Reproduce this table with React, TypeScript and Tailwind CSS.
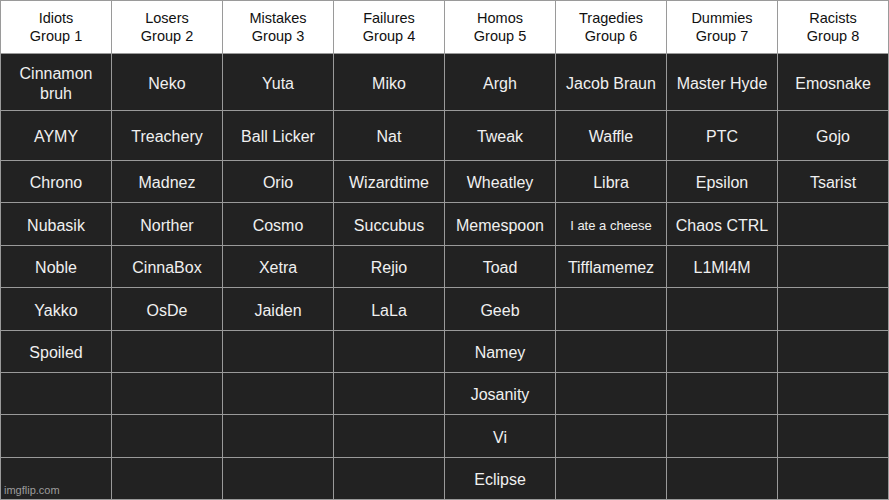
import React from "react";

const groups = [
    { name: "Idiots", members: ["Cinnamon bruh", "AYMY", "Chrono", "Nubasik", "Noble", "Yakko", "Spoiled"] },
    { name: "Losers", members: ["Neko", "Treachery", "Madnez", "Norther", "CinnaBox", "OsDe"] },
    { name: "Mistakes", members: ["Yuta", "Ball Licker", "Orio", "Cosmo", "Xetra", "Jaiden"] },
    { name: "Failures", members: ["Miko", "Nat", "Wizardtime", "Succubus", "Rejio", "LaLa"] },
    { name: "Homos", members: ["Argh", "Tweak", "Wheatley", "Memespoon", "Toad", "Geeb", "Namey", "Josanity", "Vi", "Eclipse"] },
    { name: "Tragedies", members: ["Jacob Braun", "Waffle", "Libra", "I ate a cheese", "Tifflamemez"] },
    { name: "Dummies", members: ["Master Hyde", "PTC", "Epsilon", "Chaos CTRL", "L1Ml4M"] },
    { name: "Racists", members: ["Emosnake", "Gojo", "Tsarist"] },
];

const ROWS = 10;

export default function App() {
    const rows = Array.from({ length: ROWS }, (_, r) => groups.map((g) => g.members[r] ?? ""));

    return (
        <div
            className="relative w-[889px] h-[500px] overflow-hidden bg-[#9a9a9a] p-px"
            style={{ fontFamily: '"Liberation Sans", Arial, sans-serif' }}
        >
            <div className="grid grid-cols-8 gap-px h-full grid-rows-[52px_56px_49px_41px_42px_41px_42px_41px_41px_42px_41px]">
                {groups.map((g, i) => (
                    <div
                        key={g.name}
                        className="bg-white flex flex-col items-center justify-center text-[14.5px] leading-[18px] text-[#111]"
                    >
                        <span>{g.name}</span>
                        <span>Group {i + 1}</span>
                    </div>
                ))}
                {rows.map((row, r) =>
                    row.map((m, c) => (
                        <div
                            key={`${r}-${c}`}
                            className="bg-[#222222] flex items-center justify-center text-center px-1 pt-[3px] text-[#f0f0f0] leading-[20px]"
                        >
                            <span className={m === "I ate a cheese" ? "text-[13px]" : "text-[16px]"}>{m}</span>
                        </div>
                    ))
                )}
            </div>
            <span className="absolute left-[4px] bottom-[2px] text-[11px] text-[#9c9c9c]">imgflip.com</span>
        </div>
    );
}
